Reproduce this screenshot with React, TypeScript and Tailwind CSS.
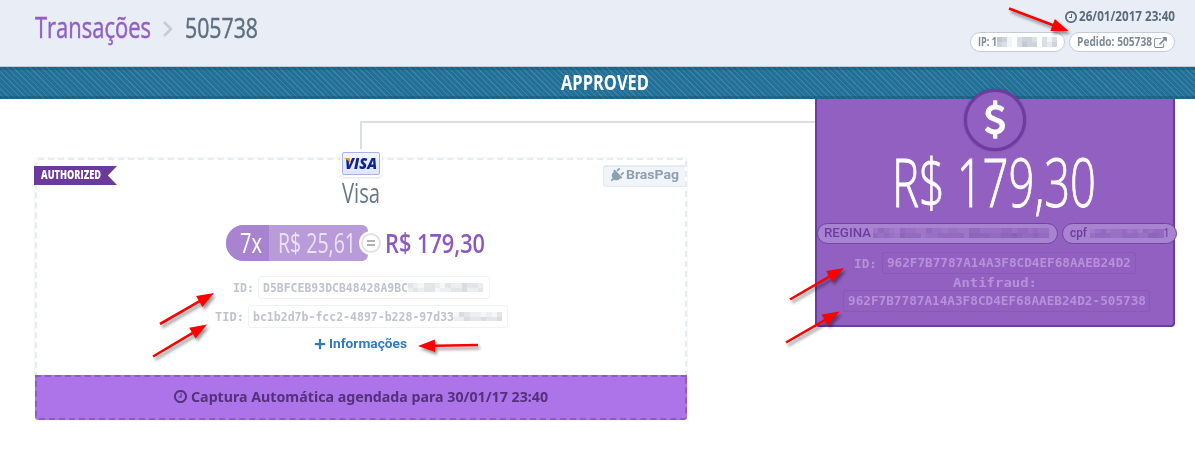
import { useLayoutEffect, useRef } from 'react';
import type { ReactNode } from 'react';
import { FaPlug, FaPlus } from 'react-icons/fa';

/** Text squeezed or stretched horizontally to a fixed width. */
function Fit({ w, className = '', children }: { w: number; className?: string; children: ReactNode }) {
  const ref = useRef<HTMLSpanElement>(null);
  useLayoutEffect(() => {
    const el = ref.current;
    if (!el) return;
    el.style.transform = 'none';
    const natural = el.getBoundingClientRect().width;
    el.style.transform = `scaleX(${w / natural})`;
  }, [w]);
  return (
    <span className={`inline-flex shrink-0 items-center leading-none ${className}`} style={{ width: w }}>
      <span ref={ref} className="inline-block shrink-0 origin-left whitespace-pre">
        {children}
      </span>
    </span>
  );
}

function Clock({ className }: { className: string }) {
  return (
    <svg viewBox="0 128 1536 1536" className={className} fill="currentColor">
      <path d="M896 544v448q0 14-9 23t-23 9h-320q-14 0-23-9t-9-23v-64q0-14 9-23t23-9h224v-352q0-14 9-23t23-9h64q14 0 23 9t9 23zm416 352q0-148-73-273t-198-198-273-73-273 73-198 198-73 273 73 273 198 198 273 73 273-73 198-198 73-273zm224 0q0 209-103 385.5t-279.5 279.5-385.5 103-385.5-103-279.5-279.5-103-385.5 103-385.5 279.5-279.5 385.5-103 385.5 103 279.5 279.5 103 385.5z" />
    </svg>
  );
}

function ExternalLink() {
  return (
    <svg viewBox="0 0 1792 1536" className="h-[11px] w-[13px] shrink-0" fill="currentColor">
      <path d="M1408 928v320q0 119-84.5 203.5t-203.5 84.5h-832q-119 0-203.5-84.5t-84.5-203.5v-832q0-119 84.5-203.5t203.5-84.5h704q14 0 23 9t9 23v64q0 14-9 23t-23 9h-704q-66 0-113 47t-47 113v832q0 66 47 113t113 47h832q66 0 113-47t47-113v-320q0-14 9-23t23-9h64q14 0 23 9t9 23zm384-864v512q0 26-19 45t-45 19-45-19l-176-176-652 652q-10 10-23 10t-23-10l-114-114q-10-10-10-23t10-23l652-652-176-176q-19-19-19-45t19-45 45-19h512q26 0 45 19t19 45z" />
    </svg>
  );
}

function Dollar() {
  return (
    <svg viewBox="0 0 1024 1792" className="h-[39px] w-[22px]" fill="currentColor">
      <path d="M978 1185q0 153-99.5 263.5t-258.5 136.5v175q0 14-9 23t-23 9h-135q-13 0-22.5-9.5t-9.5-22.5v-175q-66-9-127.5-31t-101.5-44.5-74-48-46.5-37.5-17.5-18q-17-21-2-41l103-135q7-10 23-12 15-2 24 9l2 2q113 99 243 125 37 8 74 8 81 0 142.5-43t61.5-122q0-28-15-53t-33.5-42-58.5-37.5-66-32-80-32.5q-39-16-61.5-25t-61.5-26.5-62.5-31-56.5-35.5-53.5-42.5-43.5-49-35.5-58-21-66.5-8.5-78q0-138 98-242t255-134v-180q0-13 9.5-22.5t22.5-9.5h135q14 0 23 9t9 23v176q57 6 110.5 23t87 33.5 63.5 37.5 39 29 15 14q17 18 5 38l-81 146q-8 15-23 16-14 3-27-7-3-3-14.5-12t-39-26.5-58.5-32-74.5-26-85.5-11.5q-95 0-155 43t-60 111q0 26 8.5 48t29.5 41.5 39.5 33 56 31 60.5 27 70 27.5q53 20 81 31.5t76 35 75.5 42.5 62 50 53 63.5 31.5 76.5 13 94z" />
    </svg>
  );
}

/** Redacted value: rows of tinted cells, each digit is an opacity step. */
function Mosaic({ rows, w, h, color }: { rows: string[]; w: number; h: number; color: string }) {
  return (
    <span className="flex shrink-0 flex-col" style={{ width: w, height: h }}>
      {rows.map((row, r) => (
        <span key={r} className="flex flex-1">
          {row.split('').map((c, i) => (
            <span key={i} className="flex-1" style={{ backgroundColor: color, opacity: Number(c) / 10 }} />
          ))}
        </span>
      ))}
    </span>
  );
}

function Arrow({ from, to }: { from: [number, number]; to: [number, number] }) {
  const dx = to[0] - from[0];
  const dy = to[1] - from[1];
  const len = Math.hypot(dx, dy);
  const angle = (Math.atan2(dy, dx) * 180) / Math.PI;
  return (
    <g transform={`translate(${from[0]} ${from[1]}) rotate(${angle})`}>
      <path d={`M0 -1.3H${len - 17}V-6.3L${len} 0L${len - 17} 6.3V1.3H0Z`} fill="#ff0000" />
    </g>
  );
}

const arrows: { from: [number, number]; to: [number, number] }[] = [
  { from: [1009, 8.5], to: [1068.5, 31] },
  { from: [160, 324], to: [214, 293] },
  { from: [153, 356.5], to: [207, 324.5] },
  { from: [478, 345], to: [418, 346] },
  { from: [790, 299.5], to: [844, 268] },
  { from: [786, 342.5], to: [839.5, 311.5] },
];

const mono = "font-['DejaVu_Sans_Mono',monospace] font-bold";

export default function App() {
  return (
    <div className="relative h-[458px] w-[1195px] overflow-hidden bg-white font-['Open_Sans',sans-serif]">
      <header className="flex h-[67px] justify-between border-b border-[#c3cbd3] bg-[#e9eef6] pr-5 pl-[35px]">
        <div className="flex h-[54px] items-center">
          <Fit w={116} className="text-[28.5px] text-[#9160c4] [-webkit-text-stroke:0.5px_#9160c4]">Transações</Fit>
          <svg viewBox="0 0 10 16" className="mt-[4px] ml-3 h-4 w-[10px]" fill="none" stroke="#c6cbd4" strokeWidth="2.5">
            <path d="M1 1L8 8L1 15" />
          </svg>
          <Fit w={73} className="ml-[12px] text-[28px] text-[#5d6f80] [-webkit-text-stroke:0.5px_#5d6f80]">505738</Fit>
        </div>
        <div className="flex flex-col items-end pt-[10px]">
          <div className="flex h-[14px] items-center gap-[2px] text-[#596a7a]">
            <Clock className="size-3" />
            <Fit w={96} className="text-[13.5px] font-bold">26/01/2017 23:40</Fit>
          </div>
          <div className="mt-2 flex gap-1 text-[#7d8a96]">
            <div className="flex h-5 w-[95px] items-center rounded-full border border-[#c3cdd8] bg-white pl-[7px]">
              <Fit w={19} className="text-xs font-bold">IP: 1</Fit>
              <Mosaic w={60} h={10} color="#8494a8" rows={['541034430313', '431035440324']} />
            </div>
            <div className="flex h-5 w-[106px] items-center gap-[2px] rounded-full border border-[#c3cdd8] bg-white pl-[7px]">
              <Fit w={75} className="text-xs font-bold">Pedido: 505738</Fit>
              <ExternalLink />
            </div>
          </div>
        </div>
      </header>

      <div className="flex h-8 items-center justify-center bg-[#226f98] bg-[repeating-linear-gradient(45deg,transparent_0px,transparent_2.7px,#3d83a6_3.2px,#3d83a6_4px)] pb-px pl-[14px] text-white shadow-[inset_0_3px_0_rgba(25,70,100,0.3),inset_0_-3px_0_rgba(25,70,100,0.35)]">
        <Fit w={88} className="text-[20.5px] font-bold">APPROVED</Fit>
      </div>

      <main className="flex items-start justify-between pr-5 pl-[35px]">
        <section className="relative mt-[59px] flex h-[262px] w-[652px] flex-col items-center rounded-[3px] border-2 border-b-0 border-dashed border-[#e5ecf2] shadow-[0_0_2px_rgba(0,0,0,0.12)]">
          <div className="absolute -top-[39px] left-[323px] h-7 w-[455px] border-t-2 border-l-2 border-[#dadfe4]" />
          <div className="absolute top-[6px] -left-[3px] flex h-[19px] w-[83px] items-center bg-[#6b3a9b] pb-px pl-[7px] text-white [clip-path:polygon(0_0,100%_0,89%_50%,100%_100%,0_100%)]">
            <Fit w={60} className="text-[11.5px] font-extrabold">AUTHORIZED</Fit>
          </div>
          <div className="absolute top-[5px] right-0 flex h-[22px] w-[82px] items-center rounded-l-[3px] border border-t-2 border-r-0 border-[#e4ecf3] bg-[#f1f5f9] pb-[3px] pl-[5px] text-[#8da0b0]">
            <FaPlug className="size-[15px] rotate-45" />
            <Fit w={53} className="ml-[2px] font-['Roboto',sans-serif] text-[13.5px] font-bold">BrasPag</Fit>
          </div>

          <div className="relative -mt-2 flex h-[23px] w-[38px] items-center justify-center rounded-[2px] border border-[#a9b4e4] bg-linear-to-b from-[#f4f6ff] to-[#dfe5fa] shadow-[0_0_0_2px_white,0_1px_2px_2px_rgba(0,0,0,0.12)]">
            <Fit w={32} className="pb-px text-[15px] font-extrabold text-[#0c2590] italic">VISA</Fit>
            <svg viewBox="0 0 8 6" className="absolute top-[5px] left-[1px] h-[6px] w-2" fill="#f39a12">
              <path d="M0 0H5.5L7 6Q4 1.5 0 0Z" />
            </svg>
          </div>
          <div className="flex h-[34px] items-center text-[#667787]">
            <Fit w={38} className="text-[27px]">Visa</Fit>
          </div>

          <div className="mt-4 mr-[11px] flex h-9 items-center">
            <div className="flex h-9 w-[142px] overflow-hidden rounded-l-[18px] rounded-r-[6px] bg-[#b99bda]">
              <div className="flex w-[43px] items-center bg-[#a884d0] pb-px pl-[14px] text-white">
                <Fit w={22} className="text-[27px]">7x</Fit>
              </div>
              <Fit w={78} className="ml-[9px] pb-px text-[27px] text-[#ece2f5]">R$ 25,61</Fit>
            </div>
            <div className="relative -ml-[7px] flex size-[20px] items-center justify-center rounded-full border-[2.5px] border-[#e2e2e2] bg-white shadow-[0_0_0_2px_white]">
              <svg viewBox="0 0 8 6" className="h-[6px] w-2" stroke="#999" strokeWidth="1.4">
                <path d="M0 1H8M0 5H8" />
              </svg>
            </div>
            <Fit w={100} className="ml-[4px] pb-[2px] text-[27px] font-semibold text-[#8c5abd]">R$ 179,30</Fit>
          </div>

          <div className={`mt-[15px] flex h-[23px] items-center gap-1 text-[#bfc3cf] ${mono}`}>
            <Fit w={21} className="text-[13px]">ID:</Fit>
            <div className="flex h-[23px] w-[232px] items-center rounded-[3px] border border-[#f1f2f4] pl-[4px]">
              <Fit w={145} className="text-[12px]">D5BFCEB93DCB48428A9BC</Fit>
              <Mosaic w={76} h={9} color="#a5a8b5" rows={['32133213224332', '23233122334223']} />
            </div>
          </div>
          <div className={`mt-[6px] flex h-[23px] items-center gap-1 text-[#bfc3cf] ${mono}`}>
            <Fit w={29} className="text-[13px]">TID:</Fit>
            <div className="flex h-[23px] w-[260px] items-center rounded-[3px] border border-[#f1f2f4] pl-[4px]">
              <Fit w={201} className="text-[12px]">bc1b2d7b-fcc2-4897-b228-97d33</Fit>
              <Mosaic w={49} h={9} color="#a5a8b5" rows={['143221213', '224334334']} />
            </div>
          </div>
          <div className="mt-[6px] flex h-5 items-center gap-[3px] text-[#337ab7]">
            <FaPlus className="size-3" />
            <Fit w={78} className="mr-[2px] font-['Roboto',sans-serif] text-[13.5px] font-bold">Informações</Fit>
          </div>

          <div className="mt-auto flex h-[45px] w-[652px] shrink-0 items-center justify-center gap-1 rounded-b-[3px] border-2 border-dashed border-[#8d5cc2] bg-[#ac74e8] pb-[2px] text-[#55307c]">
            <Clock className="size-[13px]" />
            <Fit w={357} className="font-['Noto_Sans',sans-serif] text-[14px] font-bold">Captura Automática agendada para 30/01/17 23:40</Fit>
          </div>
        </section>

        <section className="flex h-[228px] w-[360px] flex-col items-center rounded-b-[4px] border-2 border-t-0 border-[#6c3c9e] bg-[#9160c1]">
          <div className="relative -mt-[10px] flex size-[62px] shrink-0 items-center justify-center rounded-full border-[3px] border-[#6c3c9e] bg-[#9160c1] pb-px text-white shadow-[0_0_2px_rgba(80,40,120,0.6)]">
            <Dollar />
          </div>
          <div className="mr-[3px] flex h-[60px] shrink-0 items-center">
            <Fit w={204} className="text-[66px] font-light text-white [-webkit-text-stroke:0.9px_white]">R$ 179,30</Fit>
          </div>
          <div className="mt-[12px] flex h-[21px] shrink-0 gap-1 self-start font-['Roboto',sans-serif] text-[#6d3ba0]">
            <div className="flex w-[241px] shrink-0 items-center rounded-full border border-[#7044a5] bg-[#a883d0] pb-px pl-[6px]">
              <Fit w={47} className="text-[12.5px] font-medium">REGINA</Fit>
              <span className="w-[2px]" />
              <Mosaic w={176} h={10} color="#7447a8" rows={['243214332243323322443333443443433', '434325444233444442555544556544544']} />
            </div>
            <div className="flex w-[115px] shrink-0 items-center rounded-full border border-[#7044a5] bg-[#a883d0] pb-px pl-[7px]">
              <Fit w={17} className="text-[12.5px] font-medium">cpf</Fit>
              <span className="w-[3px]" />
              <Mosaic w={74} h={9} color="#7447a8" rows={['13423342314344', '34443344433554']} />
              <Fit w={5} className="text-[12.5px] font-medium">1</Fit>
            </div>
          </div>
          <div className={`mt-2 flex h-[22px] shrink-0 items-center gap-[5px] text-[#b791d9] ${mono}`}>
            <Fit w={23} className="text-[13px]">ID:</Fit>
            <div className="flex h-[22px] w-[254px] items-center rounded-[3px] border border-[#8959b8] pl-[4px]">
              <Fit w={244} className="pt-px text-[12.5px]">962F7B7787A14A3F8CD4EF68AAEB24D2</Fit>
            </div>
          </div>
          <div className={`flex h-4 shrink-0 items-center text-[#b791d9] ${mono}`}>
            <Fit w={84} className="text-[13px]">Antifraud:</Fit>
          </div>
          <div className={`ml-[2px] flex h-[22px] w-[307px] shrink-0 items-center rounded-[3px] border border-[#8959b8] pl-[4px] text-[#b791d9] ${mono}`}>
            <Fit w={298} className="pt-px text-[12.5px]">962F7B7787A14A3F8CD4EF68AAEB24D2-505738</Fit>
          </div>
        </section>
      </main>

      <svg viewBox="0 0 1195 458" className="pointer-events-none absolute inset-0 h-[458px] w-[1195px] drop-shadow-[2px_3px_1.5px_rgba(0,0,0,0.4)]">
        {arrows.map((a, i) => (
          <Arrow key={i} from={a.from} to={a.to} />
        ))}
      </svg>
    </div>
  );
}
